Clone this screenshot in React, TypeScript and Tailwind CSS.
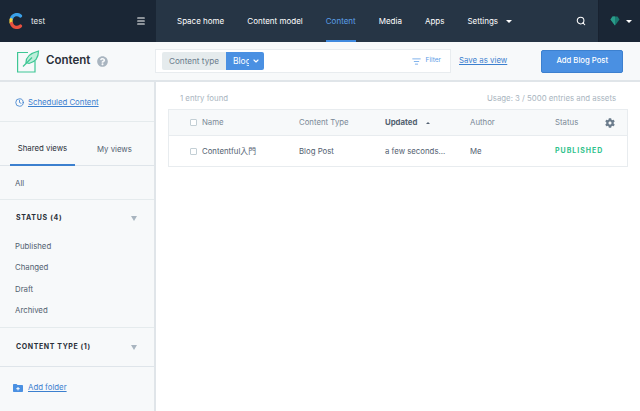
import { ChevronDown, Clock, ListFilter, Menu, Search } from "lucide-react";
import { FaCog, FaQuestionCircle } from "react-icons/fa";

const navItems = ["Space home", "Content model", "Content", "Media", "Apps"];
const statusViews = ["Published", "Changed", "Draft", "Archived"];

function Logo() {
  return (
    <svg width="14" height="16" viewBox="0 0 14 16" fill="none" strokeWidth="3.2" strokeLinecap="round">
      <path d="M2.5 5.5A5.5 5.5 0 0 1 11.5 3" stroke="#3aa0e8" />
      <path d="M2 6.5V9.5" stroke="#f5d33f" />
      <path d="M2.5 10.5A5.5 5.5 0 0 0 11.5 13" stroke="#e8503f" />
    </svg>
  );
}

function FeatherIcon() {
  return (
    <svg width="23" height="23" viewBox="0 0 23 23" fill="none" stroke="#3fc795" strokeWidth="1.2">
      <path d="M11 2.5H0.6V22H18V11" />
      <path d="M9 12.5C9 6 14 3 21.5 1C21.5 7 18.5 12 12 13.5Z" fill="#bdeeda" />
      <path d="M6 16.5L15 7.5" />
    </svg>
  );
}

function FolderAddIcon() {
  return (
    <svg width="10" height="8" viewBox="0 0 10 8" className="shrink-0">
      <path d="M0 1C0 .4 .4 0 1 0H3.5L4.5 1H9C9.6 1 10 1.4 10 2V7C10 7.6 9.6 8 9 8H1C.4 8 0 7.6 0 7Z" fill="#4a90e2" />
      <path d="M5 3V6.4M3.3 4.7H6.7" stroke="#fff" strokeWidth="1" />
    </svg>
  );
}

function Checkbox() {
  return <span className="h-[7px] w-[7px] rounded-[1px] border border-[#c3cfd5] bg-white" />;
}

function TopNav() {
  return (
    <header className="flex h-[42px] shrink-0 bg-[#263545] text-[8px] text-white">
      <div className="flex w-[156px] shrink-0 items-center bg-[#1a2635] pl-[9px] pr-[10px]">
        <Logo />
        <span className="ml-[8px] flex-1 text-[#e4e8ec]">test</span>
        <Menu className="h-[10px] w-[10px]" strokeWidth={2.5} />
      </div>
      <nav className="flex flex-1 pl-[21px]">
        {navItems.map((item) => (
          <span
            key={item}
            className={
              item === "Content"
                ? "mr-[23px] flex items-center border-b-2 border-[#3f89de] pt-[2px] text-[#5a9fe8]"
                : "mr-[23px] flex items-center"
            }
          >
            {item}
          </span>
        ))}
        <span className="flex items-center gap-[8px]">
          Settings
          <span className="h-0 w-0 border-x-[3px] border-t-[3px] border-x-transparent border-t-white" />
        </span>
      </nav>
      <div className="flex w-[43px] items-center pl-[21px]">
        <Search className="h-[10px] w-[10px]" strokeWidth={2.5} />
      </div>
      <div className="flex w-[42px] items-center gap-[6px] border-l border-[#182230] bg-[#1a2635] pl-[11px]">
        <svg width="10" height="10" viewBox="0 0 10 10">
          <path d="M2.5 0.5H7.5L9.5 3.5L5 9.5L0.5 3.5Z" fill="#1a7a70" />
          <path d="M2.5 0.5H5V9.5L0.5 3.5Z" fill="#2a9c8a" />
        </svg>
        <span className="h-0 w-0 border-x-[3px] border-t-[3px] border-x-transparent border-t-white" />
      </div>
    </header>
  );
}

function Toolbar() {
  return (
    <div className="flex h-[40px] shrink-0 items-center border-b-2 border-[#e0e5e9] bg-[#f7f9fa]">
      <div className="flex w-[155px] shrink-0 items-center pl-[17px]">
        <FeatherIcon />
        <span className="ml-[6px] text-[11.5px] font-semibold text-[#2a3039]">Content</span>
        <FaQuestionCircle className="ml-[7px] h-[11px] w-[11px] text-[#a9b5c0]" />
      </div>
      <div className="flex h-[24px] w-[296px] items-center border border-[#e8ecef] bg-white pl-[6px] pr-[9px]">
        <span className="flex h-[18px] w-[64px] items-center justify-center rounded-l-[2px] bg-[#e5ebed] text-[8.2px] text-[#6b7c8c]">
          Content type
        </span>
        <span className="flex h-[18px] w-[38px] items-center gap-[3px] rounded-r-[2px] bg-[#4a90e2] pl-[7px] text-[8.5px] text-white">
          <span className="w-[16px] overflow-hidden">Blog</span>
          <ChevronDown className="h-[8px] w-[8px]" strokeWidth={3.5} />
        </span>
        <span className="ml-auto flex items-center gap-[5px] text-[6.5px] text-[#5a9be6]">
          <ListFilter className="h-[9px] w-[9px]" />
          Filter
        </span>
      </div>
      <a className="ml-[8px] text-[7.85px] text-[#3c80cf] underline">Save as view</a>
      <button className="ml-[34px] h-[23px] w-[82px] rounded-[2px] border border-[#3c80cf] bg-[#4a90e2] text-[7.7px] font-medium text-white">
        Add Blog Post
      </button>
    </div>
  );
}

function Sidebar() {
  return (
    <aside className="flex w-[156px] shrink-0 flex-col border-r-2 border-[#e0e5e9] bg-[#f7f9fa] text-[7.8px] text-[#536171]">
      <div className="flex h-[40px] items-center gap-[4px] border-b border-[#e5ebed] pl-[15px] pt-[2px] text-[#3c80cf]">
        <Clock className="h-[9px] w-[9px]" strokeWidth={2.2} />
        <a className="underline">Scheduled Content</a>
      </div>
      <div className="flex h-[44px] border-b border-[#dfe5ea]">
        <span className="mb-[-1px] ml-[10px] flex w-[65px] items-center justify-center border-b-2 border-[#3c80cf] pt-[12px] text-[#2a3039]">
          Shared views
        </span>
        <span className="ml-[22px] flex items-center pt-[12px]">My views</span>
      </div>
      <div className="flex h-[34px] items-center border-b border-[#e5ebed] pl-[15px] pt-[3px]">All</div>
      <div className="flex h-[128px] flex-col border-b border-[#e5ebed] pl-[16px] pr-[17px]">
        <div className="flex h-[36px] items-center justify-between text-[7px] font-bold tracking-[0.7px] text-[#2a3039]">
          STATUS (4)
          <span className="h-0 w-0 border-x-[3px] border-t-[5px] border-x-transparent border-t-[#a9b5c0]" />
        </div>
        <div className="flex flex-col">
          {statusViews.map((view) => (
            <span key={view} className="-ml-px flex h-[21.5px] items-center">
              {view}
            </span>
          ))}
        </div>
      </div>
      <div className="flex h-[39px] items-center justify-between border-b border-[#dfe5ea] pl-[16px] pr-[17px] text-[7px] font-bold tracking-[0.6px] text-[#2a3039]">
        CONTENT TYPE (1)
        <span className="h-0 w-0 border-x-[3px] border-t-[5px] border-x-transparent border-t-[#a9b5c0]" />
      </div>
      <div className="flex h-[40px] items-center gap-[5px] pl-[13px] pt-[1px] text-[#3c80cf]">
        <FolderAddIcon />
        <a className="underline">Add folder</a>
      </div>
    </aside>
  );
}

function EntryTable() {
  const row = "grid grid-cols-[21px_12px_97px_86px_85px_85px_1fr] items-center";
  return (
    <div className="mx-[12px] border border-[#e8ecef] text-[7.8px]">
      <div className={`${row} h-[26px] border-b border-[#e8ecef] bg-[#f7f9fa] pt-[1px] text-[#7b8998]`}>
        <span />
        <Checkbox />
        <span>Name</span>
        <span>Content Type</span>
        <span className="flex items-center gap-[9px] font-bold text-[#536171]">
          Updated
          <span className="h-0 w-0 border-x-[2px] border-b-[2px] border-x-transparent border-b-[#536171]" />
        </span>
        <span>Author</span>
        <span className="flex items-center justify-between pr-[12px]">
          Status
          <FaCog className="h-[10px] w-[10px] text-[#6b7c8c]" />
        </span>
      </div>
      <div className={`${row} h-[30px] bg-white pt-[2px] text-[#536171]`}>
        <span />
        <Checkbox />
        <span>Contentful入門</span>
        <span>Blog Post</span>
        <span>a few seconds...</span>
        <span>Me</span>
        <span className="text-[7px] font-bold tracking-[1px] text-[#2fc28c]">PUBLISHED</span>
      </div>
    </div>
  );
}

export default function App() {
  return (
    <div
      className="flex h-[411px] w-[640px] flex-col overflow-hidden bg-white"
      style={{ fontFamily: '"Inter", "Noto Sans CJK JP", sans-serif' }}
    >
      <TopNav />
      <Toolbar />
      <div className="flex min-h-0 flex-1">
        <Sidebar />
        <main className="flex-1 pt-[11px]">
          <div className="flex justify-between pb-[4px] pl-[24px] pr-[24px] text-[7.8px] text-[#a9b5c0]">
            <span>1 entry found</span>
            <span>Usage: 3 / 5000 entries and assets</span>
          </div>
          <EntryTable />
        </main>
      </div>
    </div>
  );
}
